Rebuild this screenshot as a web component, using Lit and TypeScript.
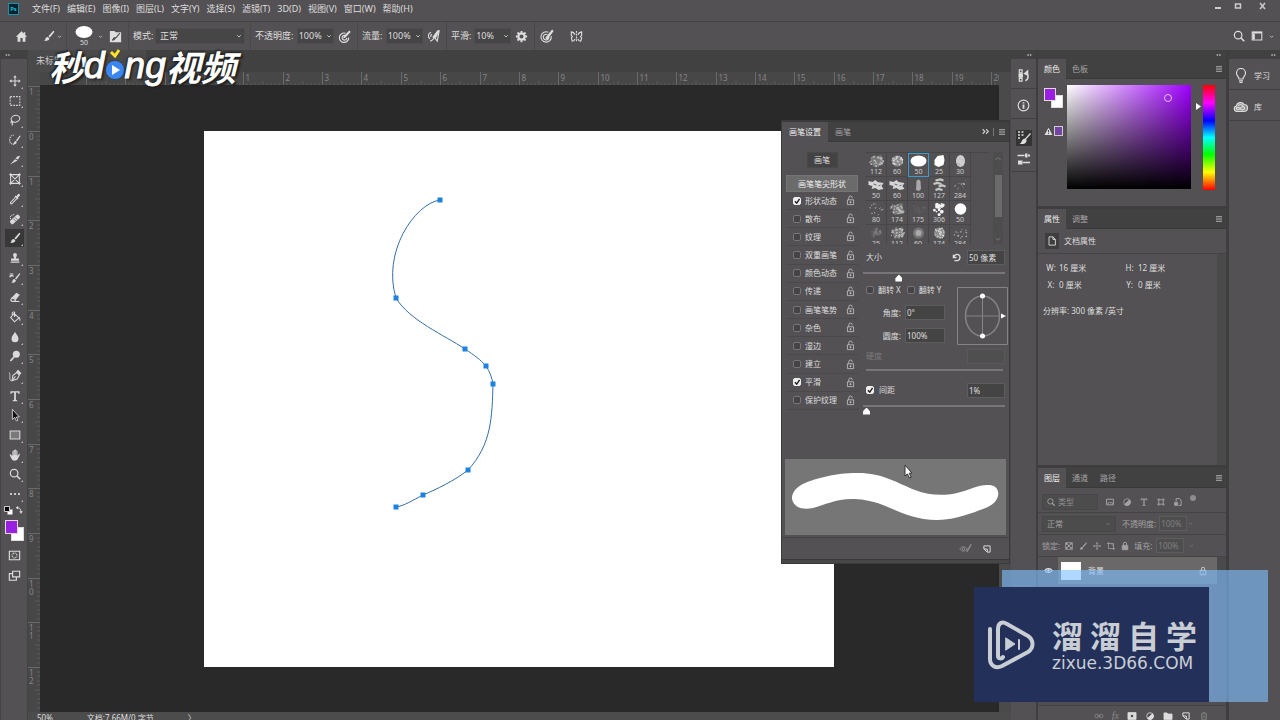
import { LitElement, html, svg, css } from "lit";
import { customElement } from "lit/decorators.js";
import { classMap } from "lit/directives/class-map.js";

const icon = (body: unknown, size = 16) =>
  html`<svg class="icon" width=${size} height=${size} viewBox="0 0 16 16" fill="none" stroke="currentColor" stroke-width="1.2" aria-hidden="true">${body}</svg>`;

const I = {
  home: svg`<path d="M8 2.500 2 8.200h1.800V13.500h3V9.600h2.400v3.900h3V8.200H14L12 6.300V3.400h-1.600v1.400z" fill="currentColor" stroke="none"/>`,
  brush: svg`<path d="M13.600 2.200c.6.500.4 1 0 1.700L9 9.800 7.300 8.300 12.400 2.700c.4-.5.8-.8 1.200-.5zM6.600 9l1.700 1.600c.2 2-1.600 3.300-5.800 3.200 1.500-1 1-2 1.800-3.400C4.900 9.400 5.700 9 6.600 9z" fill="currentColor" stroke="none"/>`,
  chevron: svg`<path d="m4.500 6.500 3.500 3.500 3.500-3.500" stroke-width="1.600"/>`,
  brushPanel: svg`<path d="M2 2h5l1 1.500h6V14H2z" fill="currentColor" stroke="none"/><path d="m12.500 4.500-4 5M8 9.500c-.5 1.500-2 2.500-3.500 2.500 1-.5 1-2.500 3-2.800z" stroke="#535153" fill="#535153"/>`,
  pressure: svg`<path d="M9 4.500a5 5 0 1 0 3.500 4.500M9 7a2.500 2.500 0 1 0 1.500 2.500"/><path d="m6.500 10 1-2.700 5.600-5.600 1.500 1.500L9 9z" fill="currentColor" stroke="none"/>`,
  airbrush: svg`<path d="M5.500 3.500C2 4.500 1.500 9 4.500 10.500M6.500 6C4.500 6.500 5 8 5.500 8.500M4.500 13c1-.5 3-1 4.500-4"/><path d="m7.500 8.500 5-6.500h1.500L12 13 9.500 9.500z" fill="none"/><path d="m13.800 2-5 6 1.500 1z" fill="currentColor"/>`,
  gear: svg`<circle cx="8" cy="8" r="3.400" stroke-width="2.400"/><path d="M8 2v2M8 12v2M2 8h2M12 8h2M3.700 3.700l1.500 1.500M10.800 10.800l1.500 1.500M3.700 12.300l1.500-1.500M10.800 5.200l1.500-1.500" stroke-width="2"/>`,
  target: svg`<path d="M10 3.500a5.500 5.500 0 1 0 3 4M9 6a3 3 0 1 0 1.600 2.600"/><path d="m7.500 9.500 6.500-8 .8.800-6 8z" fill="currentColor"/>`,
  butterfly: svg`<path d="M8 2v12" stroke-dasharray="2 1"/><path d="M6.500 6C5.500 4 4 3 2.500 3v4l1.200 1L2.500 9.500 3.500 13c1.500 0 2.500-1 3-2.500M9.500 6c1-2 2.500-3 4-3v4l-1.200 1 1.200 1.500L12.500 13c-1.500 0-2.500-1-3-2.500"/>`,
  search: svg`<circle cx="7" cy="7" r="4.300" stroke-width="1.400"/><path d="m10 10 4 4" stroke-width="1.800"/>`,
  workspace: svg`<path d="M2.500 3.500h11v9h-11z"/><path d="M2.500 3h11v2h-11zM3 5.500h2.500V12H3z" fill="currentColor" stroke="none"/>`,
  move: svg`<path d="M8 3v10M3 8h10"/><path d="m8 1.500 2 2.500H6zM8 14.500 6 12h4zM1.500 8 4 6v4zM14.500 8 12 10V6z" fill="currentColor" stroke="none"/>`,
  marquee: svg`<path d="M2.500 3h11v10h-11z" stroke-dasharray="2 1.300"/>`,
  lasso: svg`<ellipse cx="8.500" cy="6.500" rx="5" ry="3.800" transform="rotate(-15 8.500 6.500)"/><path d="M4.500 9.500c-1.500.3-1.500 2 0 2s1.500-1.500 0-2M5 11.500c.5 1 .3 2-.8 2.500"/>`,
  quick: svg`<path d="M7 12.500c-3 .8-5-1-5-4.500s2-6 4.500-5.500" stroke-dasharray="1.500 1"/><path d="M14 3c.4.300.3.800 0 1.300L10.500 9.500 9 8.500 13 3.300c.3-.4.700-.5 1-.3zM8.500 9l1.500 1c0 2-1.500 3-4 3 1-.8.800-3.800 2.500-4z" fill="currentColor" stroke="none"/>`,
  slice: svg`<path d="M2.500 13 8 7l3 1.500zM8.500 6.500 10.500 4l3.500-1-2.500 4.500z" fill="currentColor" stroke="none"/>`,
  frame: svg`<path d="M3 3h10v10H3zM3 3l10 10M13 3 3 13"/><path d="M1.500 3h2M12.500 3h2M1.500 13h2M12.500 13h2M3 1.500v2M13 1.500v2M3 12.500v2M13 12.500v2"/>`,
  dropper: svg`<path d="m8.500 6-5.500 6v1.500h1.500L10 7.500"/><path d="m7.500 5 1-1 1 .8 2-2.500c1-1 3 .8 2 2l-2.300 2.200.8 1-1 1z" fill="currentColor" stroke="none"/>`,
  heal: svg`<path d="M3 8c-1-3 1-5 4-5" stroke-dasharray="1.200 1"/><rect x="1.500" y="6" width="13" height="5" rx="1.800" transform="rotate(-42 8 8.500)" fill="currentColor" stroke="none"/><path d="m6 7.500 3.500 3.500M8 6l3.500 3.500" stroke="#535153" stroke-width=".8"/>`,
  stamp: svg`<path d="M6.800 8.500c.2-2-1-2.500-1-4a2.200 2.200 0 0 1 4.400 0c0 1.500-1.200 2-1 4h3.300V11h-9V8.500zM3 12h10v1.500H3z" fill="currentColor" stroke="none"/>`,
  history: svg`<path d="M2 3.500h4M2 6.500c1-2 4-2 4 0" /><path d="m2 7.500 0-3 2.500 2z" fill="currentColor" stroke="none"/><path d="M13.600 2.600c.6.300.4.900 0 1.500L9.500 9.800 8 8.600l4.500-5.500c.4-.5.700-.7 1.100-.5zM7.400 9.200 9 10.500c.1 2-1.700 3-5 3 1.400-1.200 1-4.300 3.400-4.300z" fill="currentColor" stroke="none"/>`,
  eraser: svg`<path d="m9.500 3 4 2.500-4.500 5.500-4-3z" fill="currentColor" stroke="none"/><path d="m4.800 8.500 4 3L7.500 13h-3L3 11.300zM7 13.200h6"/>`,
  bucket: svg`<path d="m7 4 5.500 5L7.500 13.500 3 8.500zM7.500 8V2.500c-2-.8-3 0-2.800 3"/><path d="M12.500 7.500c1.500 1 2 3 1.500 5.500-1.200-.5-1.200-3-1.500-5.500z" fill="currentColor" stroke="none"/>`,
  drop: svg`<path d="M8 2c1 2.500 4 5 4 8a4 4 0 0 1-8 0c0-3 3-5.500 4-8z" fill="currentColor" stroke="none"/>`,
  dodge: svg`<circle cx="9.500" cy="6" r="4" fill="currentColor" stroke="none"/><path d="M7 9 2.800 13.800" stroke-width="1.800"/>`,
  pen: svg`<path d="M1.500 4c2 3-1 7 1.500 9.500" stroke-width=".9"/><path d="m4.500 13.500 1-6L10 4l3 3-2.500 4.500z"/><path d="m10.300 3 1.200-1.200 3 3L13.300 6z" fill="currentColor"/><path d="m4.500 13.500 4-5"/>`,
  type: svg`<path d="M2.800 2.500h10.400v3.200h-1C12 4.200 11.500 3.900 9 3.900v8.200c0 .6.500.8 1.700.9v1H5.300v-1c1.200-.1 1.700-.3 1.700-.9V3.900C4.500 3.900 4 4.200 3.800 5.700h-1z" fill="currentColor" stroke="none"/>`,
  pointer: svg`<path d="M5 1.500v11.500l2.800-2.200 1.700 4 1.800-.8-1.700-3.700H13z" fill="#111" stroke-width="1"/>`,
  rect: svg`<path d="M2.500 3.500h11v9h-11z" fill="#7b7a7b"/>`,
  hand: svg`<path d="M5 9V4.200c0-.9 1.300-.9 1.400 0V2.700c0-.9 1.400-.9 1.500 0v-.3c.1-.9 1.400-.9 1.500 0v1c.1-.8 1.400-.8 1.400 0V9l1.400-2c.7-.7 1.600-.2 1.300.6L11.500 12c-.8 1.600-1.700 2.500-3.800 2.500-2.400 0-3.300-1.200-4.200-3L2 8c-.2-.9.900-1.100 1.400-.4z" fill="currentColor" stroke="none"/><path d="M6.500 4v4M8 3v5M9.500 3.500V8" stroke="#535153" stroke-width=".4"/>`,
  dots: svg`<path d="M2.500 8h2M7 8h2M11.500 8h2" stroke-width="2.200"/>`,
  mask: svg`<path d="M2.500 3.500h11v9h-11z"/><circle cx="8" cy="8" r="2.600" stroke-dasharray="1.200 .8"/>`,
  screens: svg`<path d="M6 3.500h7.500v6H6z"/><path d="M6 6H2.500v7H10V9.500"/>`,
  menu: svg`<path d="M2 3h12M2 6.300h12M2 9.600h12M2 13h12" stroke-width="1.700"/>`,
  fast: svg`<path d="m3 4 4 4-4 4M9 4l4 4-4 4" stroke-width="2"/>`,
  collapseR: svg`<path d="m2 4.500 5 3.500-5 3.500zM9 4.500 14 8l-5 3.500z" fill="currentColor" stroke="none"/>`,
  collapseL: svg`<path d="M7 4.500 2 8l5 3.500zM14 4.500 9 8l5 3.500z" fill="currentColor" stroke="none"/>`,
  actions: svg`<path d="M3.500 2h3v3h-3zM3.500 6.500h3v3h-3zM3.500 11h3v3h-3z"/><path d="M3.500 6.500h3v3h-3z" fill="currentColor"/><path d="M10 13.500c3-1 4-5 1.500-8" stroke-width="1.700"/><path d="m9 6 3.500-3v4.500z" fill="currentColor"/>`,
  info: svg`<circle cx="8" cy="8" r="5.700"/><path d="M8 7v4.500M8 4.500v1.400" stroke-width="1.900"/>`,
  brushList: svg`<path d="M2 2h2M5.500 2h2M2 5h2M5.500 5h2M2 8h2" stroke-width="1.300"/><path d="m14.500 3.500-5 5.500M8.800 9l1.200 1.200c0 2-2 3.300-4.800 3.300 1.300-1.100 1.200-4.500 3.600-4.500z" fill="currentColor"/>`,
  mixer: svg`<path d="M1.500 4.500h7M7 11.500h7" stroke-width="1.500"/><path d="M9 2.500h2.500v4H9zM12 3.500h2v2h-2zM2 9.500h4.500v4H2z" fill="currentColor" stroke="none"/>`,
  bulb: svg`<path d="M6 11C6 8.500 3.500 8 3.500 5a4.500 4.500 0 0 1 9 0c0 3-2.500 3.500-2.500 6zM6 12.800h4M6.500 14.500h3"/>`,
  cloud: svg`<path d="M4 12.500C.5 12 .5 7.500 3.500 7 4 3 9.500 2.500 11 5.500c4.500 0 5 7-.5 7z" fill="#8b8a8b"/><path d="M4 10.300C2.500 9 4.500 7 7 9.500s4.500 1 4.500-.5-2.500-2-4 0-3.500 2-3.500 1.300M5.500 7c.5-2 3.500-2 4.500 0"/>`,
  warn: svg`<path d="M8 1.500 15 14H1z" fill="currentColor" stroke="none"/><path d="M8 5.500v4M8 11v1.500" stroke="#3d3d3d" stroke-width="1.700"/>`,
  page: svg`<path d="M4 2.500h5.500L12.500 6v7.500H4zM9.300 2.500V6h3.200"/>`,
  lockOpen: svg`<path d="M3.500 7h9v7h-9z"/><path d="M5.500 7V4a2.500 2.500 0 0 1 5 0v.8M8 9v3M6.500 10.500h3"/>`,
  lock: svg`<path d="M3.500 7h9v7h-9z" fill="currentColor"/><path d="M5.500 7V4.500a2.500 2.500 0 0 1 5 0V7" stroke-width="1.600"/>`,
  lockLine: svg`<path d="M3.500 7h9v7h-9zM5.500 7V4.500a2.500 2.500 0 0 1 5 0V7M8 9v3"/>`,
  reset: svg`<path d="M3.500 4v4H8M4 7.500C5 4 9 2.500 11.500 4.500s2 6.500-1.500 8H5" stroke-width="1.900"/>`,
  eyeBrush: svg`<path d="M1 8.500C3 5 8 5 10 8.500 8 12 3 12 1 8.500z"/><circle cx="5.500" cy="8.500" r="1.500"/><path d="m15 3-5.500 9" stroke-width="1.800"/>`,
  newItem: svg`<path d="M3 3h10v10H8.500L3 8z" stroke-width="1.600"/><path d="M3 8h5.500v5" stroke-width="1.600"/>`,
  image: svg`<path d="M2.500 3.500h11v9h-11zM4 11l3-3 2 2 1.500-1.500L13 11" stroke-width="1.600"/>`,
  half: svg`<circle cx="8" cy="8" r="5.300"/><path d="M12 4.200A5.500 5.500 0 0 1 4 12z" fill="currentColor"/>`,
  shape: svg`<path d="M4.500 2v12M11.500 2v12M2 4.500h12M2 11.500h12" stroke-width="1.500"/>`,
  smart: svg`<path d="M5 7V2.500h5L13 5v8.500H9" stroke-width="1.600"/><path d="M2.500 8.500h5v5h-5z" fill="currentColor"/>`,
  checker: svg`<path d="M2.500 2.500h11v11h-11z"/><path d="M3 3h3v3H3zM9.500 3h3v3h-3zM6 6h3.500v3.500H6zM3 9.500h3v3H3zM9.500 9.500h3v3h-3z" fill="currentColor" stroke="none"/>`,
  artboard: svg`<path d="M4 1.500V12h10.500M1.500 4H12v10.500M8 4l4 4"/>`,
  eye: svg`<path d="M1.500 8C4 3.500 12 3.500 14.500 8 12 12.500 4 12.500 1.500 8z" stroke-width="2"/><circle cx="8" cy="8" r="1.800" fill="currentColor"/>`,
  link: svg`<circle cx="4.500" cy="8" r="3"/><circle cx="11.500" cy="8" r="3"/><path d="M5 8h6"/>`,
  addMask: svg`<path d="M1.500 2.500h13v11h-13z" fill="currentColor"/><circle cx="8" cy="8" r="2.700" fill="#535153"/>`,
  folder: svg`<path d="M1.500 3h5L8 4.800h6.500V13.500h-13z" fill="currentColor"/>`,
  trash: svg`<path d="M3 4.500h10M6 4V2.500h4V4M4 5l.5 9h7L12 5M6.500 7v5M9.500 7v5"/>`,
  swap: svg`<path d="M4 3.500c5 0 8 2 8 8" stroke-width="1.800"/><path d="M6 1v5L2 3.500zM9.500 11h5L12 15z" fill="currentColor"/>`,
};

const MENUS = ["文件(F)", "编辑(E)", "图像(I)", "图层(L)", "文字(Y)", "选择(S)", "滤镜(T)", "3D(D)", "视图(V)", "窗口(W)", "帮助(H)"];

const TOOLS: [string, unknown][] = [
  ["移动", I.move], ["选框", I.marquee], ["套索", I.lasso], ["快速选择", I.quick], ["切片", I.slice], ["图框", I.frame],
  ["吸管", I.dropper], ["修复画笔", I.heal], ["画笔", I.brush], ["图章", I.stamp], ["历史画笔", I.history], ["橡皮擦", I.eraser],
  ["油漆桶", I.bucket], ["模糊", I.drop], ["减淡", I.dodge], ["钢笔", I.pen], ["文字", I.type], ["选择", I.pointer],
  ["矩形", I.rect], ["抓手", I.hand], ["缩放", I.search], ["更多", I.dots],
];

const OPTIONS: [string, boolean][] = [
  ["形状动态", true], ["散布", false], ["纹理", false], ["双重画笔", false], ["颜色动态", false], ["传递", false],
  ["画笔笔势", false], ["杂色", false], ["湿边", false], ["建立", false], ["平滑", true], ["保护纹理", false],
];

const TIPS: [string, string][] = [
  ["112", "grain"], ["60", "round"], ["50", "oval"], ["25", "blob"], ["30", "soft"],
  ["50", "splash"], ["60", "splash"], ["100", "narrow"], ["127", "streak"], ["284", "sparse"],
  ["80", "sparse"], ["174", "grain"], ["175", "faint"], ["306", "spots"], ["50", "disc"],
  ["25", "dim"], ["112", "grain"], ["60", "glow"], ["174", "round"], ["284", "sparse"],
];

const ANCHORS = [[236, 69], [192, 167], [261, 218], [282, 235], [289, 253], [264, 339], [219, 364], [192, 376]];

const speckle = (seed: number, count: number, rx: number, ry: number, size: number) => {
  let s = seed * 7919 + 13;
  const next = () => (s = (s * 16807) % 2147483647) / 2147483647;
  return Array.from({ length: count }, () => {
    const a = next() * Math.PI * 2;
    const d = Math.sqrt(next());
    return svg`<circle cx=${8 + Math.cos(a) * d * rx} cy=${7 + Math.sin(a) * d * ry} r=${size * (0.5 + next())}/>`;
  });
};

const tip = (kind: string, i: number) => {
  switch (kind) {
    case "oval": return svg`<ellipse cx="8" cy="7" rx="8" ry="5.500" fill="#fff"/>`;
    case "disc": return svg`<circle cx="8" cy="7" r="5.800" fill="#fff"/>`;
    case "blob": return svg`<path d="M3 6 6 2l6-1 1 5-1 5-5 2-4-2z" fill="#fff"/>`;
    case "soft": return svg`<ellipse cx="8" cy="7" rx="4.500" ry="6" fill="#cfcfcf"/><g fill="#b2b2b2">${speckle(i + 1, 10, 4, 5, 0.5)}</g>`;
    case "narrow": return svg`<path d="M6 3q2-3 4 0l.5 8-2 2-3-1z" fill="#a9a9a9"/>`;
    case "splash": return svg`<path d="m0 3 4 1 3-2 2 2 6 1-2 3 2 3-5 1-3-2-4 1 1-3-4-1z" fill="#d6d6d6"/><path d="m5 6 3 1M10 8l2-1" stroke="#666"/>`;
    case "streak": return svg`<path d="M4 2.500 9 1.500l3 1M2 6l4-1 4 1M7 8.500l4-1 3 1M4 12l3-1 4 1" fill="none" stroke="#c8c8c8" stroke-width="2.200"/>`;
    case "round": return svg`<circle cx="8" cy="7" r="5.500" fill="#8c8c8c"/><g fill="#d8d8d8">${speckle(i + 1, 34, 5.5, 5.5, 0.6)}</g>`;
    case "grain": return svg`<path d="M2 4 13 1l1 9-9 3z" fill="#777"/><g fill="#bcbcbc">${speckle(i + 1, 40, 7, 5.5, 0.7)}</g>`;
    case "dim": return svg`<g fill="#7e7e7e">${speckle(i + 1, 36, 5, 5, 0.7)}</g>`;
    case "glow": return svg`<circle cx="8" cy="7" r="5.500" fill="#777"/><circle cx="8" cy="7" r="3" fill="#aaa"/>`;
    case "spots": return svg`<g fill="#f2f2f2">${speckle(i + 1, 17, 6, 6, 1.3)}</g>`;
    case "faint": return svg`<g fill="#636163">${speckle(i + 1, 24, 7, 4, 0.7)}</g>`;
    default: return svg`<g fill="#aaa">${speckle(i + 1, 15, 7, 6, 0.6)}</g>`;
  }
};

const base = css`
  *, *::before, *::after { box-sizing: border-box; }
  button, input, select { font: inherit; color: inherit; border: 0; margin: 0; padding: 0; background: none; border-radius: 0; outline: 0; }
  button { display: inline-flex; align-items: center; justify-content: center; flex: none; }
  select { appearance: none; }
  .icon { display: block; flex: none; }
  .tabs { display: flex; height: 20px; background: #424142; border-bottom: 1px solid #3b3a3b; align-items: stretch; }
  .tab { padding: 0 8px; color: #a2a1a2; }
  .tab.on { background: #535153; color: #eee; height: 20px; }
  .tabs .end { margin-left: auto; padding: 0 3px; color: #a8a7a8; }
  input[type="checkbox"] { appearance: none; width: 8px; height: 8px; flex: none; border: 1px solid #777577; border-radius: 2px; background: #454445; }
  input[type="checkbox"]:checked { border-color: #eee; background: #eee url("data:image/svg+xml,%3Csvg xmlns='http://www.w3.org/2000/svg' viewBox='0 0 8 8'%3E%3Cpath d='M1.500 4 3.500 6 6.500 1.500' fill='none' stroke='%23222' stroke-width='1.500'/%3E%3C/svg%3E") center / 7px no-repeat; }
  .field { background: #454445; border: 1px solid #5e5d5e; padding: 0 1px; min-width: 0; }
`;

@customElement("brush-settings")
class BrushSettings extends LitElement {
  static styles = [base, css`
    :host { display: block; width: 229px; background: #535153; border: 1px solid #3b3a3b; border-top-width: 2px; font-size: 8px; line-height: 12px; color: #dedede; }
    .tab { padding: 0 7px; }
    .tabs .fast { margin-left: auto; width: 17px; color: #d0d0d0; border-right: 1px solid #777; height: 8px; align-self: center; }
    .tabs .end { margin-left: 0; padding: 0; width: 15px; }
    .body { display: grid; grid-template-columns: 72px 1fr; gap: 8px; padding: 10px 4px 0; height: 317px; }
    .left { display: flex; flex-direction: column; align-items: stretch; }
    .brushes { align-self: center; width: 31px; height: 16px; background: #444344; border: 1px solid #4a494a; margin-bottom: 7px; }
    .shape { height: 17px; background: #6c6b6c; border: 1px solid #767576; color: #eee; }
    .list { display: grid; grid-auto-rows: 1fr; height: 218px; }
    .opt { display: flex; align-items: center; padding: 0 2px 0 7px; gap: 4px; border-bottom: 1px solid #4b4a4b; }
    .opt .icon { margin-left: auto; color: #c5c5c5; }
    .tips { display: grid; grid-template-columns: 1fr 10px; gap: 4px; height: 92px; margin-right: 2px; }
    .cells { display: grid; grid-template-columns: repeat(5, 21px); grid-auto-rows: 24px; overflow: hidden; border-top: 1px solid #484748; }
    .cell { display: flex; flex-direction: column; align-items: center; justify-content: flex-start; font-size: 7px; line-height: 8px; padding: 1px 0 0; border-right: 1px solid #484748; border-bottom: 1px solid #484748; color: #cfcfcf; }
    .cell.on { border: 1px solid #3c9ccc; padding: 0; }
    .bar { display: flex; flex-direction: column; align-items: center; justify-content: space-between; background: #4e4d4e; color: #777; }
    .thumb { width: 7px; height: 42px; background: #6c6b6c; margin-bottom: 8px; }
    .line { display: flex; align-items: center; gap: 5px; height: 16px; }
    .grow { margin-left: auto; }
    .value { width: 38px; height: 15px; }
    .short { width: 40px; height: 15px; }
    .right { min-width: 0; }
    .size { margin-top: 5px; }
    input[type="range"] { appearance: none; display: block; width: 142px; height: 13px; margin: 1px 0 0 -3px; }
    input[type="range"]::-webkit-slider-runnable-track { height: 2px; background: #777677; }
    input[type="range"]::-webkit-slider-thumb { appearance: none; width: 7px; height: 7px; margin-top: 3px; background: #fff; clip-path: polygon(50% 0, 100% 55%, 100% 100%, 0 100%, 0 55%); }
    .flips { display: flex; align-items: center; gap: 4px; height: 12px; width: 90px; white-space: nowrap; margin-top: 5px; }
    .flips label + input { margin-left: 2px; }
    .geometry { display: grid; grid-template-columns: 79px 51px; gap: 12px; }
    .fields { display: grid; align-content: start; gap: 8px; padding: 9px 0 0; }
    .fields .line { height: 15px; justify-content: flex-end; gap: 4px; }
    .dial { margin-top: -9px; }
    .hard { color: #7b7a7b; margin-top: 3px; }
    .hard .field { background: #504f50; border-color: #595859; }
    .rule { display: block; }
    .spacing { margin-top: 6px; }
    .preview { position: relative; margin: 0 3px; background: #777677; height: 76px; }
    .preview svg { display: block; width: 100%; height: 100%; }
    .preview .cursor { position: absolute; left: 117px; top: 4px; width: 12px; height: 16px; }
    .foot { display: flex; justify-content: flex-end; align-items: center; gap: 10px; height: 22px; margin-top: 2px; padding-right: 17px; border-top: 1px solid #444344; color: #d8d8d8; }
    .foot .off { color: #8c8b8c; }
    .grip { height: 4px; border-top: 1px solid #3b3a3b; background: #484748; }
  `];

  render() {
    return html`
      <div class="tabs">
        <button class="tab on">画笔设置</button><button class="tab">画笔</button>
        <button class="fast" aria-label="折叠">${icon(I.fast, 9)}</button>
        <button class="end" aria-label="菜单">${icon(I.menu, 8)}</button>
      </div>
      <div class="body">
        <div class="left">
          <button class="brushes">画笔</button>
          <button class="shape">画笔笔尖形状</button>
          <div class="list">${OPTIONS.map(([name, on], i) => html`<div class="opt"><input type="checkbox" id="o${i}" .checked=${on}><label for="o${i}">${name}</label>${icon(I.lockOpen, 11)}</div>`)}</div>
        </div>
        <div class="right">
          <div class="tips">
            <div class="cells">${TIPS.map(([n, k], i) => html`<button class=${classMap({ cell: true, on: i === 2 })}><svg width="17" height="14" viewBox="0 0 16 14" fill="#999">${tip(k, i)}</svg>${n}</button>`)}</div>
            <div class="bar"><svg width="8" height="14" viewBox="0 0 16 16" fill="none" stroke="currentColor" stroke-width="2"><path d="m3 10 5-5 5 5"/></svg><div class="thumb"></div>${icon(I.chevron, 10)}</div>
          </div>
          <div class="line size"><label for="size">大小</label><button class="grow" aria-label="重置">${icon(I.reset, 11)}</button><input class="field value" id="size" value="50 像素"></div>
          <input type="range" aria-label="大小" min="0" max="100" value="24">
          <div class="flips"><input type="checkbox" id="fx"><label for="fx">翻转 X</label><input type="checkbox" id="fy"><label for="fy">翻转 Y</label></div>
          <div class="geometry">
            <div class="fields">
              <div class="line"><label for="angle">角度:</label><input class="field short" id="angle" value="0°"></div>
              <div class="line"><label for="round">圆度:</label><input class="field short" id="round" value="100%"></div>
            </div>
            <svg class="dial" width="51" height="58" viewBox="0 0 51 58" fill="none" stroke="#858485">
              <path d="M.5.500h50v57H.5z"/><ellipse cx="25.500" cy="29" rx="17" ry="20" stroke-width="1.500"/><path d="M8 29h35M25.500 9v40"/>
              <circle cx="25.500" cy="9" r="2.500" fill="#fff" stroke="none"/><circle cx="25.500" cy="49" r="2.500" fill="#fff" stroke="none"/><path d="m44 26.500 5 2.500-5 2.500z" fill="#fff" stroke="none"/>
            </svg>
          </div>
          <div class="line hard"><label for="hard">硬度</label><input class="field value grow" id="hard" disabled></div>
          <svg class="rule" width="137" height="12" aria-hidden="true"><path d="M0 6h137" stroke="#777677" stroke-width="2"/></svg>
          <div class="line spacing"><input type="checkbox" id="space" .checked=${true}><label for="space">间距</label><input class="field value grow" aria-label="间距" value="1%"></div>
          <input type="range" aria-label="间距" min="0" max="100" value="0">
        </div>
      </div>
      <div class="preview">
        <svg viewBox="0 0 221 76" preserveAspectRatio="none"><path fill="#fff" d="M7 40C7 28 20 23 35 19 50 15 60 14 73 14 98 14 112 24 130 31 150 39 170 36 185 30 195 26 200 26 205 26 212 27 214 32 213 37 211 44 205 48 195 51 180 57 165 61 152 61 130 61 115 53 98 46 85 41 75 40 67 40 50 40 40 46 28 49 18 51 9 49 7 40z"/></svg>
        <svg class="cursor" viewBox="0 0 12 16"><path d="M3 2v11l2.500-2 2 4 1.700-.8-2-4H10z" fill="#fff" stroke="#333"/></svg>
      </div>
      <div class="foot"><button class="off" aria-label="预览">${icon(I.eyeBrush, 13)}</button><button aria-label="新建">${icon(I.newItem, 10)}</button></div>
      <div class="grip"></div>`;
  }
}

@customElement("side-panels")
class SidePanels extends LitElement {
  static styles = [base, css`
    :host { display: flex; flex-direction: column; gap: 3px; background: #3f3e3f; font-size: 8px; line-height: 12px; color: #dedede; min-height: 0; }
    section { background: #535153; }
    .tab { padding: 0 6px; min-width: 27px; }
    .color { height: 147px; }
    .picker { display: grid; grid-template-columns: 23px 1fr 12px 12px; padding: 6px 11px 0 6px; }
    .swatches { display: flex; flex-direction: column; gap: 18px; padding-top: 3px; }
    .pair { position: relative; height: 20px; }
    .pair span { position: absolute; width: 12px; height: 13px; border: 1px solid #ddd; }
    .pair .bg { left: 7px; top: 7px; background: #fff; }
    .pair .fg { left: 0; top: 0; background: #9b1fe0; }
    .gamut { display: flex; align-items: center; gap: 1px; color: #ddd; }
    .gamut span { width: 9px; height: 10px; border: 1px solid #ccc; background: #7543a4; }
    .field-map { position: relative; height: 104px; background: linear-gradient(to top, #000, transparent), linear-gradient(to right, #fff, #9f00ff); }
    .ring { position: absolute; left: 78%; top: 9px; width: 8px; height: 8px; border: 1px solid #eab8ff; border-radius: 50%; }
    .hue { height: 105px; background: linear-gradient(red, #f0f 17%, #00f 34%, #0ff 50%, #0f0 66%, #ff0 83%, red); }
    .mark { display: flex; justify-content: flex-end; padding: 18px 2px 0 0; }
    .props { height: 256px; }
    .doc { display: flex; align-items: center; gap: 5px; height: 25px; padding-left: 7px; border-bottom: 1px solid #454445; }
    .doc .box { background: #3f3e3f; padding: 2px 1px; }
    .facts { display: grid; grid-template-columns: 1fr 9px; height: 211px; }
    .facts .scroll { background: #4b4a4b; }
    .facts dl { display: grid; grid-template-columns: 16px 62px 17px 62px; row-gap: 5px; margin: 8px 0 0 5px; align-content: start; }
    .facts dd, .facts dt { margin: 0; white-space: nowrap; }
    .facts dt { text-align: center; }
    .facts .wide { grid-column: 1 / -1; margin-top: 9px; }
    .layers { flex: 1; min-height: 0; display: flex; flex-direction: column; color: #a3a2a3; }
    .row { display: flex; align-items: center; border-bottom: 1px solid #454445; padding: 0 4px; flex: none; height: 22px; }
    .filter { height: 25px; gap: 7px; padding-top: 3px; }
    .filter .kind, .blend { display: flex; align-items: center; justify-content: space-between; height: 16px; background: #4d4c4d; border: 1px solid #484748; }
    .kind { width: 56px; padding: 0 3px; gap: 2px; }
    .kind select { flex: 1; min-width: 0; color: #8f8e8f; }
    .blend { width: 74px; padding: 0 4px; margin-right: 6px; }
    .blend select { flex: 1; min-width: 0; }
    .dim { color: #7f7e7f; }
    .amount { width: 28px; height: 15px; background: #4f4e4f; margin-left: 3px; }
    .dot { width: 6px; height: 6px; border-radius: 50%; background: #8e8d8e; margin-bottom: 8px; }
    .locks { gap: 4px; }
    .locks .amount { margin-left: 0; }
    .layer { display: grid; grid-template-columns: 20px 1fr 9px; flex: none; height: 27px; background: #4b4a4b; color: #e4e4e4; }
    .layer .eye { background: #535153; }
    .layer .item { display: flex; align-items: center; background: #6b6967; padding: 0 9px 0 3px; gap: 7px; }
    .item .paper { width: 20px; height: 18px; background: #fff; }
    .item .icon { margin-left: auto; }
    .void { flex: 1; min-height: 0; background: #504e50; }
    .foot { display: flex; align-items: center; justify-content: flex-end; gap: 8px; height: 15px; flex: none; border-top: 1px solid #454445; padding: 5px 17px 0 0; color: #ddd; }
    .foot .off { color: #8a898a; }
    .foot em { font: italic 10px/10px "Liberation Serif", serif; }
  `];

  render() {
    return html`
      <section class="color">
        <div class="tabs"><button class="tab on">颜色</button><button class="tab">色板</button><button class="end" aria-label="菜单">${icon(I.menu, 8)}</button></div>
        <div class="picker">
          <div class="swatches"><div class="pair"><span class="bg"></span><span class="fg"></span></div><div class="gamut">${icon(I.warn, 9)}<span></span></div></div>
          <div class="field-map"><div class="ring"></div></div>
          <div class="mark"><svg width="5" height="7" viewBox="0 0 5 7"><path d="m0 0 5 3.500L0 7z" fill="#fff"/></svg></div>
          <div class="hue"></div>
        </div>
      </section>
      <section class="props">
        <div class="tabs"><button class="tab on">属性</button><button class="tab">调整</button><button class="end" aria-label="菜单">${icon(I.menu, 8)}</button></div>
        <div class="doc"><span class="box">${icon(I.page, 12)}</span>文档属性</div>
        <div class="facts">
          <dl><dt>W:</dt><dd>16 厘米</dd><dt>H:</dt><dd>12 厘米</dd><dt>X:</dt><dd>0 厘米</dd><dt>Y:</dt><dd>0 厘米</dd><dd class="wide">分辨率: 300 像素 /英寸</dd></dl>
          <div class="scroll"></div>
        </div>
      </section>
      <section class="layers">
        <div class="tabs"><button class="tab on">图层</button><button class="tab">通道</button><button class="tab">路径</button><button class="end" aria-label="菜单">${icon(I.menu, 8)}</button></div>
        <div class="row filter"><div class="kind">${icon(I.search, 10)}<select aria-label="筛选"><option>类型</option></select></div>
          ${[I.image, I.half, I.type, I.shape, I.smart].map((g) => icon(g, 10))}<span class="dot"></span></div>
        <div class="row"><div class="blend"><select aria-label="混合模式"><option>正常</option></select>${icon(I.chevron, 6)}</div>
          <label for="op">不透明度:</label><input class="field amount dim" id="op" value="100%"><span class="dim">${icon(I.chevron, 7)}</span></div>
        <div class="row locks"><span>锁定:</span>${[I.checker, I.brush, I.move, I.artboard, I.lock].map((g) => icon(g, 10))}
          <label for="fill">填充:</label><input class="field amount dim" id="fill" value="100%"><span class="dim">${icon(I.chevron, 7)}</span></div>
        <div class="layer"><button class="eye" aria-label="可见">${icon(I.eye, 9)}</button><div class="item"><span class="paper"></span>背景${icon(I.lockLine, 10)}</div></div>
        <div class="void"></div>
        <div class="foot"><span class="off">${icon(I.link, 10)}</span><em class="off">fx</em>${[I.addMask, I.half, I.folder, I.newItem].map((g) => icon(g, 10))}<span class="off">${icon(I.trash, 10)}</span></div>
      </section>`;
  }
}

@customElement("app-root")
class AppRoot extends LitElement {
  static styles = [base, css`
    :host { display: flex; flex-direction: column; position: relative; height: 100vh; overflow: hidden; background: #535153; color: #dedede; font: 9px/12px "Noto Sans", "Noto Sans CJK SC", sans-serif; }
    .menubar { display: flex; align-items: center; height: 22px; flex: none; padding: 0 0 3px 8px; border-bottom: 1px solid #444344; }
    .logo { width: 11px; height: 12px; background: #06222f; border: 1px solid #1695ad; color: #21b8d0; font-size: 6px; line-height: 10px; text-align: center; margin-right: 13px; font-weight: 700; }
    nav { display: flex; gap: 7px; }
    nav a { color: inherit; text-decoration: none; white-space: nowrap; }
    .window { display: flex; align-items: center; gap: 12px; margin-left: auto; padding: 0 12px 6px 0; color: #ccc; }
    .options { display: grid; grid-template-columns: 38px 29px 62px 122px 107px 89px 88px 54px 1fr 52px; height: 28px; flex: none; }
    .group { display: flex; align-items: center; justify-content: space-between; padding: 0 5px 0 4px; border-right: 1px solid #4a494a; white-space: nowrap; }
    .group.plain { border: 0; }
    .group.center { justify-content: center; padding: 0 0 0 4px; border: 0; }
    .preset { padding: 0 5px 0 8px; }
    .pill { display: flex; flex-direction: column; font-size: 7px; line-height: 8px; }
    .mode { display: flex; align-items: center; width: 90px; height: 16px; padding: 0 1px 0 4px; background: #474647; border: 1px solid #4e4d4e; }
    .mode select { flex: 1; min-width: 0; }
    .combo { display: flex; align-items: center; width: 37px; height: 16px; background: #464546; border: 1px solid #4e4d4e; }
    .combo input { width: 27px; padding-left: 1px; }
    .main { display: grid; grid-template-columns: 28px 1fr 27px 188px 54px; grid-template-rows: minmax(0, 1fr); flex: 1; min-height: 0; background: #3f3e3f; }
    .tools { display: flex; flex-direction: column; background: #535153; border-left: 1px solid #454445; border-right: 1px solid #444344; min-height: 0; }
    .strip { height: 9px; flex: none; background: #424142; display: flex; align-items: center; padding: 0 4px; color: #bbb; }
    .strip.end { justify-content: flex-end; }
    .toolset { display: grid; grid-auto-rows: 1fr; height: 433px; margin-top: 12px; padding: 0 3px 0 4px; flex: none; }
    .tool { position: relative; width: 100%; margin: 1px 0; color: #dadada; }
    .tool::after { content: ""; position: absolute; right: 1px; bottom: 1px; border: 1px solid #bbb; border-left-color: transparent; border-top-color: transparent; }
    .tool.on { background: #393839; }
    .mini { display: flex; justify-content: space-between; padding: 2px 4px 0 3px; height: 16px; }
    .inks { position: relative; height: 24px; margin: 0 4px; }
    .inks button { position: absolute; width: 13px; height: 14px; border: 1px solid #ddd; }
    .inks .bg { left: 6px; top: 7px; background: #fff; }
    .inks .fg { left: 0; top: 0; background: #9b1fe0; }
    .modes { display: flex; flex-direction: column; align-items: center; gap: 5px; padding-top: 4px; }
    .document { display: grid; grid-template-columns: 12px minmax(0, 1fr) 12px; grid-template-rows: 22px 13px minmax(0, 1fr) 8px; min-width: 0; }
    .doc-tabs { grid-column: 1 / -1; background: #424142; display: flex; }
    .doc-tab { background: #4b4a4b; width: 118px; justify-content: flex-start; padding-left: 8px; color: #ccc; }
    .ruler { display: block; width: 100%; height: 100%; background: #484748; color: #858485; overflow: hidden; font-size: 8px; }
    .corner, .gutter { background: #4b4a4b; }
    .canvas { position: relative; background: #29292a; overflow: hidden; }
    .artboard { position: absolute; left: 164px; top: 46px; width: 630px; height: 536px; background: #fff; overflow: visible; }
    .status { grid-column: 1 / -1; display: flex; gap: 34px; background: #4d4c4d; padding-left: 9px; white-space: nowrap; font-size: 8px; }
    .dock { background: #535153; display: flex; flex-direction: column; border-right: 2px solid #3f3e3f; }
    .dock-item { height: 30px; border-bottom: 1px solid #424142; padding: 4px 0 0; width: 100%; }
    .dock-pair { display: flex; flex-direction: column; align-items: center; gap: 5px; height: 53px; padding-top: 11px; border-bottom: 1px solid #424142; }
    .dock-pair .on { background: #353435; }
    .side { display: flex; flex-direction: column; min-height: 0; }
    .side side-panels { flex: 1; }
    .learn { display: flex; flex-direction: column; background: #535153; border-left: 3px solid #3f3e3f; font-size: 8px; }
    .learn button { height: 31px; border-bottom: 1px solid #424142; justify-content: flex-start; gap: 5px; padding: 4px 0 0 4px; }
    brush-settings { position: absolute; right: 270px; top: 120px; }
    .video { position: absolute; left: 49px; top: 44px; display: flex; align-items: center; color: #fff; font: italic 700 35px/44px "Noto Sans CJK SC", sans-serif; text-shadow: 0 0 3px #222, 2px 2px 2px #222, -1px -1px 2px #222; }
    .video .latin { font: italic 400 37px/44px "Liberation Sans", sans-serif; -webkit-text-stroke: 1px #fff; }
    .video svg { display: block; margin-top: 1px; }
    .tint { position: absolute; right: 12px; bottom: 18px; width: 266px; height: 132px; background: rgba(128, 190, 255, 0.62); }
    .brand { position: absolute; right: 71px; bottom: 18px; width: 235px; height: 115px; background: #22305a; color: #c9cdd4; display: flex; align-items: center; gap: 17px; padding-left: 13px; }
    .words { display: flex; flex-direction: column; }
    .name { display: flex; gap: 7px; font: 700 31px/36px "Noto Sans CJK SC", sans-serif; }
    .site { font: 17px/20px "DejaVu Sans", sans-serif; }
  `];

  combo(id: string, label: string, value: string, glyph: unknown) {
    return html`<div class="group"><label for=${id}>${label}:</label><div class="combo"><input id=${id} value=${value}><button aria-label="展开">${icon(I.chevron, 8)}</button></div><button aria-label=${label}>${icon(glyph, 15)}</button></div>`;
  }

  topRuler() {
    const marks = [];
    const last = Math.floor((window.innerWidth - 486) / 39.36);
    for (let n = -3; n <= last; n++) {
      const x = Math.round(164 + n * 39.36) + 0.5;
      marks.push(svg`<path d="M${x} 0v13" stroke="#6a696a"/>`);
      if (n > 0) marks.push(svg`<text x=${x + 2} y="9" fill="currentColor">${n}</text>`);
      for (let k = 1; k < 10; k++) marks.push(svg`<path d="M${Math.round(x + k * 3.936)} ${k === 5 ? 9 : 11}v4" stroke="#626162" stroke-width=".8"/>`);
    }
    return html`<svg class="ruler" aria-hidden="true">${marks}</svg>`;
  }

  sideRuler() {
    const marks = [];
    const last = Math.floor((window.innerHeight - 150) / 44.67);
    for (let n = -1; n <= last; n++) {
      const y = Math.round(46 + n * 44.67) + 0.5;
      marks.push(svg`<path d="M0 ${y}h12" stroke="#6a696a"/>`);
      String(Math.abs(n)).split("").forEach((d, i) => marks.push(svg`<text x="1" y=${y + 8 + i * 8} fill="currentColor">${d}</text>`));
      for (let k = 1; k < 10; k++) marks.push(svg`<path d="M${k === 5 ? 7 : 9} ${Math.round(y + k * 4.467)}h5" stroke="#626162" stroke-width=".8"/>`);
    }
    return html`<svg class="ruler" aria-hidden="true">${marks}</svg>`;
  }

  render() {
    return html`
      <header class="menubar">
        <span class="logo">Ps</span>
        <nav>${MENUS.map((m) => html`<a href="#">${m}</a>`)}</nav>
        <div class="window">
          <svg width="8" height="10"><path d="M1 7h6" stroke="currentColor" stroke-width="2"/></svg>
          <svg width="8" height="10" fill="none"><path d="M1.500 3h5v4h-5z" stroke="currentColor" stroke-width="1.500"/></svg>
          <svg width="14" height="10"><path d="m6 2 5 6M11 2 6 8" stroke="currentColor" stroke-width="1.500"/></svg>
        </div>
      </header>
      <div class="options">
        <div class="group center"><button aria-label="主页">${icon(I.home, 15)}</button></div>
        <div class="group"><button aria-label="画笔">${icon(I.brush, 14)}</button>${icon(I.chevron, 7)}</div>
        <div class="group preset"><button class="pill" aria-label="画笔预设"><svg width="18" height="14"><ellipse cx="9" cy="7" rx="8.500" ry="6" fill="#fff"/></svg>50</button>${icon(I.chevron, 7)}<button aria-label="画笔设置">${icon(I.brushPanel, 15)}</button></div>
        <div class="group"><label for="mode">模式:</label><div class="mode"><select id="mode"><option>正常</option></select>${icon(I.chevron, 8)}</div></div>
        ${this.combo("opacity", "不透明度", "100%", I.pressure)}
        ${this.combo("flow", "流量", "100%", I.airbrush)}
        ${this.combo("smooth", "平滑", "10%", I.gear)}
        <div class="group plain"><button aria-label="压力">${icon(I.target, 15)}</button><button aria-label="对称">${icon(I.butterfly, 15)}</button></div>
        <span></span>
        <div class="group plain"><button aria-label="搜索">${icon(I.search, 14)}</button><button aria-label="工作区">${icon(I.workspace, 14)}</button>${icon(I.chevron, 7)}</div>
      </div>
      <div class="main">
        <div class="tools">
          <div class="strip">${icon(I.collapseR, 6)}</div>
          <div class="toolset">${TOOLS.map(([n, g], i) => html`<button class=${classMap({ tool: true, on: i === 8 })} aria-label=${n}>${icon(g, 14)}</button>`)}</div>
          <div class="mini">
            <svg width="9" height="9"><path d="M3.500 3.500h5v5h-5z" fill="#fff"/><path d="M.5.500h5v5h-5z" fill="#000" stroke="#ccc"/></svg>
            ${icon(I.swap, 8)}
          </div>
          <div class="inks"><button class="bg" aria-label="背景色"></button><button class="fg" aria-label="前景色"></button></div>
          <div class="modes"><button aria-label="快速蒙版">${icon(I.mask, 15)}</button><button aria-label="屏幕模式">${icon(I.screens, 15)}</button></div>
        </div>
        <div class="document">
          <div class="doc-tabs"><button class="doc-tab">未标题-1</button></div>
          <div class="corner"></div>${this.topRuler()}<div class="corner"></div>
          ${this.sideRuler()}
          <div class="canvas">
            <svg class="artboard" viewBox="0 0 630 536" fill="none">
              <path d="M236 69C210 73 178 122 192 167 205 189 240 204 261 218 270 224 277 229 282 235 286 241 288 247 289 253 288 285 288 313 264 339 250 350 233 358 219 364 209 369 200 375 192 376" stroke="#356ea5"/>
              ${ANCHORS.map(([x, y]) => svg`<rect x=${x - 2.5} y=${y - 2.5} width="5" height="5" fill="#1f82e0"/>`)}
            </svg>
          </div>
          <div class="gutter"></div>
          <div class="status"><span>50%</span><span>文档:7.66M/0 字节</span><span>〉</span></div>
        </div>
        <div class="dock">
          <div class="strip end">${icon(I.collapseL, 6)}</div>
          <button class="dock-item" aria-label="历史记录">${icon(I.actions, 15)}</button>
          <button class="dock-item" aria-label="信息">${icon(I.info, 15)}</button>
          <div class="dock-pair"><button class="on" aria-label="画笔设置">${icon(I.brushList, 16)}</button><button aria-label="画笔">${icon(I.mixer, 16)}</button></div>
        </div>
        <div class="side"><div class="strip end">${icon(I.collapseR, 6)}</div><side-panels></side-panels></div>
        <div class="learn">
          <div class="strip end">${icon(I.collapseL, 6)}</div>
          <button>${icon(I.bulb, 16)}学习</button><button>${icon(I.cloud, 16)}库</button>
        </div>
      </div>
      <brush-settings></brush-settings>
      <div class="video"><span>秒</span><span class="latin">d</span><svg width="20" height="38" viewBox="0 0 20 38"><circle cx="10" cy="22" r="9.500" fill="#3b86f0" stroke="#222" stroke-width=".5"/><path d="m7 17 8 5-8 5z" fill="#fff"/><path d="m6 4 4 4 4-6" fill="none" stroke="#ffe32b" stroke-width="3"/></svg><span class="latin">ng</span><span>视频</span></div>
      <div class="tint"></div>
      <div class="brand">
        <svg width="48" height="50" viewBox="0 0 48 50" fill="none" stroke="#c9cdd4" stroke-width="4" stroke-linecap="round" stroke-linejoin="round">
          <path d="M3 9v30c0 7 6 10 12 7l26-14c6-4 6-12 0-16L20 4c-5-3-9-1-9 5v27c0 3 4 3 5 1"/><path d="m19 18 9 6-9 6z" fill="#c9cdd4" stroke-width="1"/><path d="M32 20v9" stroke-width="2"/>
        </svg>
        <div class="words"><div class="name"><span>溜</span><span>溜</span><span>自</span><span>学</span></div><div class="site">zixue.3D66.COM</div></div>
      </div>`;
  }
}
